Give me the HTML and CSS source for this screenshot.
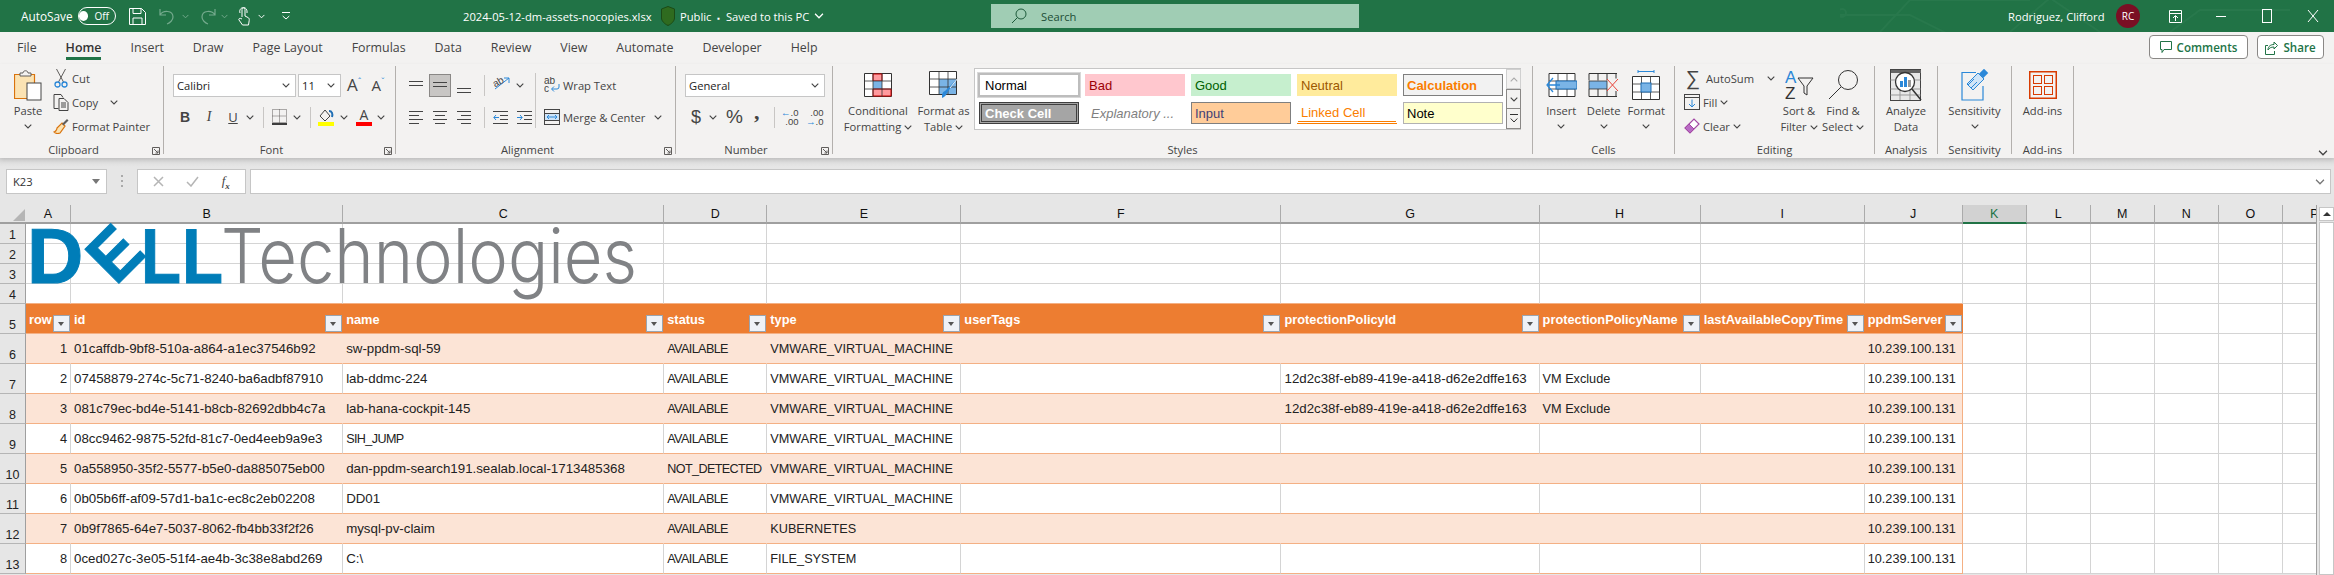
FILE: index.html
```html
<!DOCTYPE html>
<html lang="en">
<head>
  <meta charset="UTF-8" />
  <title>2024-05-12-dm-assets-nocopies.xlsx - Excel</title>
  <link rel="stylesheet" href="styles.css">
</head>
<body>
<svg class="defs" width="0" height="0">
  <symbol id="chev" viewBox="0 0 8 5"><path d="M.7.7 4 4 7.3.7" fill="none" stroke="currentColor" stroke-width="1.1"/></symbol>
  <symbol id="launch" viewBox="0 0 8 8"><path d="M.5 7.5V.5h7v7zM2 2l4 4M6 3.5V6H3.5" fill="none" stroke="#605e5c"/></symbol>
</svg>

<!-- title bar -->
<header class="titlebar">
  <svg class="circuit" viewBox="0 0 500 32" width="500" height="32"><path d="M0 15h70l60 30M40 32l30-32h120M170 32l40-34 50 34M330 32l30-22h90" fill="none" stroke="#2a7a4e" stroke-width="2"/><circle cx="2" cy="13" r="4" fill="none" stroke="#2a7a4e" stroke-width="2"/></svg>
  <span class="autosave">AutoSave</span>
  <span class="toggle"><i></i>Off</span>
  <svg class="qat-save" width="17" height="17" viewBox="0 0 17 17" fill="none" stroke="#fff"><path d="M.5.5h12l4 4v12H.5zM4 .5v5h8V.5M4 16.5V10h9v6.500"/></svg>
  <svg class="qat-undo" width="18" height="17" viewBox="0 0 18 17" fill="none" stroke="#74aa8d" stroke-width="1.200"><path d="M1 1v6h6M1 7c3-5 13-5 13 2 0 3-3 6-6 7"/></svg>
  <svg class="qat-chev dim" width="7" height="5"><use href="#chev"/></svg>
  <svg class="qat-redo" width="18" height="17" viewBox="0 0 18 17" fill="none" stroke="#74aa8d" stroke-width="1.200"><path d="M17 1v6h-6M17 7C14 2 4 2 4 9c0 3 3 6 6 7"/></svg>
  <svg class="qat-chev dim" width="7" height="5"><use href="#chev"/></svg>
  <svg class="qat-touch" width="12" height="19" viewBox="0 0 12 19" fill="none" stroke="#fff"><path d="M4 10V2.500a1.500 1.500 0 0 1 3 0V9l3 1.500c1 .5 1.500 1.500 1.200 3L10.500 18h-6L1 13c-.7-1 .5-2.500 3-1M2 6c-1-3 1-5.500 3.500-5.500S9.500 3 9 6"/></svg>
  <svg class="qat-chev2" width="7" height="5"><use href="#chev"/></svg>
  <svg class="qat-more" width="8" height="8" viewBox="0 0 8 8" fill="none" stroke="#fff"><path d="M0 .5h8M.7 4 4 7l3.300-3"/></svg>
  <span class="filename">2024-05-12-dm-assets-nocopies.xlsx</span>
  <svg class="shield" width="14" height="20" viewBox="0 0 14 20"><path d="M7 .5 13.500 3v9c0 3-3 6-6.500 7.500C3.500 18 .5 15 .5 12V3z" fill="#2f6b1f" stroke="#1b4a16"/></svg>
  <span class="doc-state">Public &nbsp;<b>▪</b>&nbsp; Saved to this PC</span>
  <svg class="doc-chev" width="10" height="6" viewBox="0 0 8 5"><use href="#chev"/></svg>
  <div class="search">
    <svg width="16" height="16" viewBox="0 0 16 16" fill="none" stroke="#1d5a3a"><circle cx="10" cy="6" r="5"/><path d="M6.500 9.500 1 15"/></svg>
    <span>Search</span>
  </div>
  <span class="user">Rodriguez, Clifford</span>
  <span class="avatar">RC</span>
  <svg class="win win-ribbon" width="13" height="13" viewBox="0 0 13 13" fill="none" stroke="#fff"><path d="M.5.5h12v12H.5zM.5 3.500h12M6.500 11V6M4 8l2.500-2.500L9 8"/></svg>
  <svg class="win win-min" width="12" height="12" viewBox="0 0 12 12" stroke="#fff"><path d="M1 6.500h10"/></svg>
  <svg class="win win-max" width="12" height="14" viewBox="0 0 12 14" fill="none" stroke="#fff"><rect x="1.500" y=".5" width="9" height="13"/></svg>
  <svg class="win win-close" width="12" height="14" viewBox="0 0 12 14" stroke="#fff"><path d="M1 1l10 12M11 1 1 13"/></svg>
</header>

<!-- tabs -->
<nav class="tabs">
  <a>File</a><a class="active">Home</a><a>Insert</a><a>Draw</a><a>Page Layout</a><a>Formulas</a><a>Data</a><a>Review</a><a>View</a><a>Automate</a><a>Developer</a><a>Help</a>
  <div class="tab-actions">
    <button class="action comments"><svg width="12" height="13" viewBox="0 0 12 13" fill="none" stroke="#217346"><path d="M.5.500h11v8H4L2 11.500V8.500H.5z"/></svg>Comments</button>
    <button class="action share"><svg width="13" height="15" viewBox="0 0 13 15" fill="none" stroke="#217346"><path d="M3 5.500H.5v9h9V11M3 10c0-4 3-5.500 6-5.500V2l3.500 3.500L9 9V7c-3 0-5 1-6 3z"/></svg>Share</button>
  </div>
</nav>

<!-- ribbon -->
<section class="ribbon">
  <div class="group g-clipboard">
    <div class="body">
      <div class="big paste">
        <div class="big-icon"><svg width="28" height="31" viewBox="0 0 28 31"><path d="M.5 4.500h20v24H.5z" fill="#fbe3b3" stroke="#d9730d" stroke-width="1.200"/><path d="M6 5V3h3c0-3 5-3 5 0h3v3H6z" fill="#f3f2f1" stroke="#605e5c"/><rect x="13" y="13" width="14" height="17" fill="#fff" stroke="#444"/></svg></div>
        <div class="big-text">Paste</div>
        <svg class="chev"><use href="#chev"/></svg>
      </div>
      <div class="small-col">
        <div class="small"><svg class="ico" width="15" height="19" viewBox="0 0 15 19" fill="none"><path d="M3 0l7 13M12 0 5 13" stroke="#605e5c"/><circle cx="4" cy="15.500" r="2.500" stroke="#2b88d8" stroke-width="1.300"/><circle cx="11" cy="15.500" r="2.500" stroke="#2b88d8" stroke-width="1.300"/></svg><span>Cut</span></div>
        <div class="small"><svg class="ico" width="15" height="17" viewBox="0 0 15 17" fill="none" stroke="#444"><path d="M5 14.500H.5V.5h7l2 3M5.500 4.500h5l4 4v8h-9zM7.500 9h5M7.500 11h5M7.500 13h5"/></svg><span>Copy</span><svg class="chev copy-chev"><use href="#chev"/></svg></div>
        <div class="small"><svg class="ico" width="16" height="16" viewBox="0 0 16 16"><path d="M9 5l3 3-5 7c-2 1-5 .5-6-1 1 0 3-2 3-4z" fill="#fbe3b3" stroke="#d9730d" stroke-width="1.200"/><path d="M9 6l5-5 1.500 1.500-5 5z" fill="#605e5c"/></svg><span>Format Painter</span></div>
      </div>
    </div>
    <div class="label">Clipboard<svg class="launch"><use href="#launch"/></svg></div>
  </div>

  <div class="group g-font">
    <div class="body">
      <div class="tool-row">
        <div class="select font-name">Calibri<svg class="chev"><use href="#chev"/></svg></div>
        <div class="select font-size">11<svg class="chev"><use href="#chev"/></svg></div>
        <span class="grow">A<sup>ˆ</sup></span>
        <span class="shrink">A<sup>ˇ</sup></span>
      </div>
      <div class="tool-row row2">
        <b class="fmt fmt-b">B</b>
        <i class="fmt fmt-i">I</i>
        <u class="fmt fmt-u">U</u>
        <svg class="chev ml6"><use href="#chev"/></svg>
        <span class="rsep ml9"></span>
        <svg class="ml8" width="15" height="16" viewBox="0 0 15 16" fill="none" stroke="#605e5c" stroke-dasharray="1 1"><path d="M.5.500h14v13H.5zM7.500.500v13M.5 7h14"/><path d="M0 15h15" stroke="#000" stroke-width="1.500" stroke-dasharray="none"/></svg>
        <svg class="chev ml6"><use href="#chev"/></svg>
        <span class="rsep ml9"></span>
        <svg class="ml7" width="16" height="18" viewBox="0 0 16 18"><path d="M2 8l5-6 5 6-5 5z" fill="none" stroke="#444"/><path d="M11 3c3 0 4 3 3 6" fill="none" stroke="#1f6fb5" stroke-width="2"/><rect y="14" width="16" height="4" fill="#ff0"/></svg>
        <svg class="chev ml6"><use href="#chev"/></svg>
        <span class="font-color ml8">A</span>
        <svg class="chev ml5"><use href="#chev"/></svg>
      </div>
    </div>
    <div class="label">Font<svg class="launch"><use href="#launch"/></svg></div>
  </div>

  <div class="group g-align">
    <div class="body align-body">
      <div class="align-grid">
        <div class="tool-row">
          <span class="al"><svg width="14" height="9" stroke="#444"><path d="M0 .5h14M0 4.500h14"/></svg></span>
          <span class="al on"><svg width="14" height="9" stroke="#444"><path d="M0 1.500h14M0 5.500h14"/></svg></span>
          <span class="al al-bot"><svg width="14" height="9" stroke="#444"><path d="M0 4.500h14M0 8.500h14"/></svg></span>
          <span class="rsep ml7"></span>
          <svg class="ml8" width="17" height="16" viewBox="0 0 17 16" fill="none"><path d="M2 12 16 1M11 1h5v5" stroke="#2b88d8"/><text x="0" y="9" class="abc" transform="rotate(-30 4 6)">ab</text></svg>
          <svg class="chev ml6"><use href="#chev"/></svg>
        </div>
        <div class="tool-row row2">
          <span class="al"><svg width="14" height="13" stroke="#444"><path d="M0 .5h14M0 4.500h10M0 8.500h14M0 12.500h10"/></svg></span>
          <span class="al"><svg width="14" height="13" stroke="#444"><path d="M0 .5h14M2 4.500h10M0 8.500h14M2 12.500h10"/></svg></span>
          <span class="al"><svg width="14" height="13" stroke="#444"><path d="M0 .5h14M4 4.500h10M0 8.500h14M4 12.500h10"/></svg></span>
          <span class="rsep ml7"></span>
          <svg class="ml8" width="15" height="13" fill="none" stroke="#444"><path d="M0 .5h15M7 4.500h8M7 8.500h8M0 12.500h15"/><path d="M6 6.500H1M3 4 .8 6.500 3 9" stroke="#2b88d8"/></svg>
          <svg class="ml9" width="15" height="13" fill="none" stroke="#444"><path d="M0 .5h15M7 4.500h8M7 8.500h8M0 12.500h15"/><path d="M0 6.500h5M3 4l2.200 2.500L3 9" stroke="#2b88d8"/></svg>
        </div>
      </div>
      <span class="rsep tall"></span>
      <div class="wrap-col">
        <div class="small wrap-row"><svg class="ico" width="16" height="16" viewBox="0 0 16 16" fill="none"><text x="0" y="7" class="abc">ab</text><text x="0" y="15" class="abc">c</text><path d="M15 7v3a2 2 0 0 1-2 2H8M10 9.500 7.500 12l2.500 2.500" stroke="#2b88d8"/></svg><span>Wrap Text</span></div>
        <div class="small merge-row"><svg class="ico" width="16" height="16" viewBox="0 0 16 16" fill="none"><rect x=".5" y=".5" width="15" height="15" stroke="#444"/><path d="M.5 4.500h15M.5 11.500h15" stroke="#444"/><rect x="1" y="5" width="14" height="6" fill="#cfe4f7"/><path d="M3 8h10M5 6 3 8l2 2M11 6l2 2-2 2" stroke="#2b88d8"/></svg><span>Merge &amp; Center</span><svg class="chev merge-chev"><use href="#chev"/></svg></div>
      </div>
    </div>
    <div class="label">Alignment<svg class="launch"><use href="#launch"/></svg></div>
  </div>

  <div class="group g-number">
    <div class="body">
      <div class="tool-row"><div class="select num-format">General<svg class="chev"><use href="#chev"/></svg></div></div>
      <div class="tool-row row2 num-row">
        <span class="sym dollar">$</span>
        <svg class="chev ml9"><use href="#chev"/></svg>
        <span class="sym percent">%</span>
        <span class="sym comma">,</span>
        <span class="rsep num-sep"></span>
        <span class="dec ml7"><span><em>←</em>.0</span><span>.00</span></span>
        <span class="dec ml8"><span>.00</span><span><em>→</em>.0</span></span>
      </div>
    </div>
    <div class="label">Number<svg class="launch"><use href="#launch"/></svg></div>
  </div>

  <div class="group g-styles">
    <div class="body styles-body">
      <div class="big b-cond">
        <div class="big-icon"><svg width="28" height="24" viewBox="0 0 28 24"><path d="M.5.5h27v23H.5z" fill="#fff" stroke="#333"/><path d="M9 1h9v7H9z" fill="#ff9a9e" stroke="#c00"/><path d="M9 8h9v8H9z" fill="#7ab4e6"/><path d="M9 16h18v7H9z" fill="#ff9a9e" stroke="#c00"/><path d="M9 .5v23M18 .5v23M.5 8h27M.5 16h27" fill="none" stroke="#333" stroke-width=".8"/></svg></div>
        <div class="big-text">Conditional</div>
        <div class="big-text">Formatting <svg class="chev"><use href="#chev"/></svg></div>
      </div>
      <div class="big b-table">
        <div class="big-icon"><svg width="30" height="28" viewBox="0 0 30 28"><path d="M.5.500h27v23H.5z" fill="#fff" stroke="#333"/><path d="M10 8h17v15H10z" fill="#7ab4e6"/><path d="M10 .5v23M19 .5v23M.5 8h27M.5 16h27" fill="none" stroke="#333" stroke-width=".8"/><path d="M29 7 20 19l-2 3c-1 3-3 4-5 5 0-3 0-6 3-7l2-2z" fill="#2b88d8"/><path d="M29 7 21 17" stroke="#eee" stroke-width="1"/></svg></div>
        <div class="big-text">Format as</div>
        <div class="big-text">Table <svg class="chev"><use href="#chev"/></svg></div>
      </div>
      <div class="gallery">
        <div class="gallery-cells">
          <span class="st st-normal">Normal</span><span class="st st-bad">Bad</span><span class="st st-good">Good</span><span class="st st-neutral">Neutral</span><span class="st st-calc">Calculation</span>
          <span class="st st-check">Check Cell</span><span class="st st-expl">Explanatory ...</span><span class="st st-input">Input</span><span class="st st-linked">Linked Cell</span><span class="st st-note">Note</span>
        </div>
        <div class="gallery-scroll">
          <span class="gs gs-up"><svg class="chev flip"><use href="#chev"/></svg></span>
          <span class="gs"><svg class="chev"><use href="#chev"/></svg></span>
          <span class="gs gs-more"><svg width="8" height="9" viewBox="0 0 8 9" fill="none" stroke="#333"><path d="M0 .5h8M.7 4.500 4 8l3.300-3.500"/></svg></span>
        </div>
      </div>
    </div>
    <div class="label">Styles</div>
  </div>

  <div class="group g-cells">
    <div class="body cells-body">
      <div class="big b-cell">
        <div class="big-icon"><svg width="31" height="24" viewBox="0 0 31 24"><path d="M3 .5h26v23H3z" fill="#fff" stroke="#333"/><path d="M3 8h26M3 16h26M12 .5v23M21 .5v23" stroke="#333" stroke-width=".8"/><rect x="10" y="8" width="21" height="8" fill="#7ab4e6" stroke="#1f6fb5"/><path d="M14 12H2M7 5 1 12l6 7" fill="none" stroke="#2b88d8" stroke-width="1.300"/></svg></div>
        <div class="big-text">Insert</div>
        <svg class="chev"><use href="#chev"/></svg>
      </div>
      <div class="big b-cell">
        <div class="big-icon"><svg width="31" height="24" viewBox="0 0 31 24"><path d="M1 .5h28M1 23.500h28M1 .5v7M1 16v7.500M10 .5v7M19 .5v7M10 16v7M19 16v7M28 .5v5M28 18v5" fill="none" stroke="#333"/><path d="M1 8h18v8H1z" fill="#7ab4e6" stroke="#333" stroke-width=".8"/><path d="M19 6l11 12M30 6 19 18" stroke="#e8433a" stroke-width="1"/></svg></div>
        <div class="big-text">Delete</div>
        <svg class="chev"><use href="#chev"/></svg>
      </div>
      <div class="big b-cell">
        <div class="big-icon"><svg width="28" height="30" viewBox="0 0 28 30"><path d="M6 1.500h16M6 0v3M22 0v3" stroke="#2b88d8"/><path d="M.5 6.500h27v23H.5z" fill="#fff" stroke="#333"/><path d="M.5 14h27M.5 22h27M9.500 6.500v23M18.500 6.500v23" stroke="#333" stroke-width=".8"/><rect x="9" y="13" width="10" height="9" fill="#7ab4e6" stroke="#1f6fb5"/></svg></div>
        <div class="big-text">Format</div>
        <svg class="chev"><use href="#chev"/></svg>
      </div>
    </div>
    <div class="label">Cells</div>
  </div>

  <div class="group g-editing">
    <div class="body edit-body">
      <div class="small-col edit-col">
        <div class="small"><span class="sigma">∑</span><span>AutoSum</span><svg class="chev autosum-chev"><use href="#chev"/></svg></div>
        <div class="small"><svg class="ico" width="16" height="16" viewBox="0 0 16 16" fill="none"><rect x=".5" y=".5" width="15" height="15" stroke="#444"/><path d="M.5 3.500h15" stroke="#444"/><path d="M8 5.500v7M5 10l3 3 3-3" stroke="#2b88d8"/></svg><span>Fill</span><svg class="chev ml3"><use href="#chev"/></svg></div>
        <div class="small"><svg class="ico" width="16" height="16" viewBox="0 0 16 16"><path d="M1 10 10 1l5 5-9 9z" fill="#fff" stroke="#a349a4" stroke-width="1.200"/><path d="M1 10l4-4 5 5-4 4z" fill="#b86bc4" stroke="#a349a4"/></svg><span>Clear</span><svg class="chev ml3"><use href="#chev"/></svg></div>
      </div>
      <div class="big b-sort">
        <div class="big-icon"><svg width="29" height="30" viewBox="0 0 29 30" fill="none"><text x="0" y="13" class="az az-a">A</text><text x="0" y="29" class="az">Z</text><path d="M13 8h15l-6 8v9l-3-2v-7z" stroke="#333"/></svg></div>
        <div class="big-text">Sort &amp;</div>
        <div class="big-text">Filter <svg class="chev"><use href="#chev"/></svg></div>
      </div>
      <div class="big b-find">
        <div class="big-icon"><svg width="30" height="30" viewBox="0 0 30 30" fill="none" stroke="#333"><circle cx="20" cy="10" r="9.500"/><path d="M13 17 1 29"/></svg></div>
        <div class="big-text">Find &amp;</div>
        <div class="big-text">Select <svg class="chev"><use href="#chev"/></svg></div>
      </div>
    </div>
    <div class="label">Editing</div>
  </div>

  <div class="group g-analysis">
    <div class="body">
      <div class="big b-full">
        <div class="big-icon"><svg width="32" height="32" viewBox="0 0 32 32" fill="none"><rect x=".5" y=".5" width="30" height="31" fill="#e8e8e8" stroke="#444"/><rect x="1" y="1" width="30" height="3" fill="#666"/><path d="M.5 11h30M.5 20h30M.5 26h30M10 4v27M20 4v27" stroke="#999"/><circle cx="15" cy="13" r="9.500" fill="#fff" stroke="#333" stroke-width="1.300"/><rect x="10" y="12" width="3" height="6" fill="#2b88d8"/><rect x="14" y="8" width="3" height="10" fill="#2b88d8"/><rect x="18" y="11" width="3" height="7" fill="#999"/><path d="M22 20l9 11" stroke="#333" stroke-width="1.500"/></svg></div>
        <div class="big-text">Analyze</div>
        <div class="big-text">Data</div>
      </div>
    </div>
    <div class="label">Analysis</div>
  </div>

  <div class="group g-sens">
    <div class="body">
      <div class="big b-full">
        <div class="big-icon"><svg width="28" height="32" viewBox="0 0 28 32" fill="none"><path d="M1 3.500h14M1 3v28h21V17" stroke="#2b88d8" stroke-width="1.200"/><path d="M6 15 17 4l6 6-11 11z" fill="#cfe4f7" stroke="#2b88d8"/><path d="M9 16l6 6M12 13l6 6" stroke="#2b88d8" transform="rotate(90 14 15)"/><rect x="20" y="1" width="6" height="7" fill="#2b88d8" transform="rotate(45 23 4)"/></svg></div>
        <div class="big-text">Sensitivity</div>
        <svg class="chev"><use href="#chev"/></svg>
      </div>
    </div>
    <div class="label">Sensitivity</div>
  </div>

  <div class="group g-addins">
    <div class="body">
      <div class="big b-full">
        <div class="big-icon"><svg width="28" height="28" viewBox="0 0 28 28" fill="none" stroke="#d83b01"><rect x=".75" y=".75" width="26.500" height="26.500" stroke-width="1.500"/><rect x="4.500" y="4.500" width="8" height="8"/><rect x="15.500" y="4.500" width="8" height="8"/><rect x="4.500" y="15.500" width="8" height="8"/><rect x="15.500" y="15.500" width="8" height="8"/></svg></div>
        <div class="big-text">Add-ins</div>
      </div>
    </div>
    <div class="label">Add-ins</div>
  </div>
  <svg class="collapse" viewBox="0 0 8 5"><use href="#chev"/></svg>
</section>

<!-- formula bar -->
<div class="formula">
  <div class="namebox">K23<span class="down"></span></div>
  <span class="dots"></span>
  <div class="fx-btns">
    <svg width="11" height="11" stroke="#b5b5b5" stroke-width="1.500"><path d="M1 1l9 9M10 1l-9 9"/></svg>
    <svg width="13" height="11" fill="none" stroke="#b5b5b5" stroke-width="1.500"><path d="M1 6l4 4 7-9"/></svg>
    <span class="fx">f<sub>x</sub></span>
  </div>
  <div class="fx-input"><svg width="10" height="6" viewBox="0 0 8 5" class="fx-chev"><use href="#chev"/></svg></div>
</div>

<!-- sheet -->
<main class="sheet">
  <div class="grid-wrap">
    <table class="grid">
      <colgroup>
        <col class="c-row"><col class="c-a"><col class="c-b"><col class="c-c"><col class="c-d"><col class="c-e"><col class="c-f"><col class="c-g"><col class="c-h"><col class="c-i"><col class="c-j"><col class="c-x"><col class="c-x"><col class="c-x"><col class="c-x"><col class="c-x"><col class="c-x">
      </colgroup>
      <tr class="col-head">
        <th class="corner"><svg width="14" height="14"><path d="M13 1v12H1z" fill="#b5b5b5"/></svg></th>
        <th>A</th><th>B</th><th>C</th><th>D</th><th>E</th><th>F</th><th>G</th><th>H</th><th>I</th><th>J</th><th class="sel">K</th><th>L</th><th>M</th><th>N</th><th>O</th><th>P</th>
      </tr>
      <tr class="r20"><th class="rh">1</th><td></td><td></td><td></td><td></td><td></td><td></td><td></td><td></td><td></td><td></td><td></td><td></td><td></td><td></td><td></td><td></td></tr>
      <tr class="r20"><th class="rh">2</th><td></td><td></td><td></td><td></td><td></td><td></td><td></td><td></td><td></td><td></td><td></td><td></td><td></td><td></td><td></td><td></td></tr>
      <tr class="r20"><th class="rh">3</th><td></td><td></td><td></td><td></td><td></td><td></td><td></td><td></td><td></td><td></td><td></td><td></td><td></td><td></td><td></td><td></td></tr>
      <tr class="r20 before-head"><th class="rh">4</th><td class="o"></td><td class="o"></td><td class="o"></td><td class="o"></td><td class="o"></td><td class="o"></td><td class="o"></td><td class="o"></td><td class="o"></td><td class="o"></td><td></td><td></td><td></td><td></td><td></td><td></td></tr>
      <tr class="r30 head">
        <th class="rh">5</th>
        <td class="h">row<span class="filter"></span></td><td class="h">id<span class="filter"></span></td><td class="h">name<span class="filter"></span></td><td class="h">status<span class="filter"></span></td><td class="h">type<span class="filter"></span></td><td class="h">userTags<span class="filter"></span></td><td class="h">protectionPolicyId<span class="filter"></span></td><td class="h">protectionPolicyName<span class="filter"></span></td><td class="h">lastAvailableCopyTime<span class="filter"></span></td><td class="h">ppdmServer<span class="filter"></span></td>
        <td></td><td></td><td></td><td></td><td></td><td></td>
      </tr>
      <tr class="r30 band"><th class="rh">6</th><td class="d num">1</td><td class="d">01caffdb-9bf8-510a-a864-a1ec37546b92</td><td class="d">sw-ppdm-sql-59</td><td class="d st-col">AVAILABLE</td><td class="d ty-col">VMWARE_VIRTUAL_MACHINE</td><td class="d"></td><td class="d"></td><td class="d"></td><td class="d"></td><td class="d last">10.239.100.131</td><td></td><td></td><td></td><td></td><td></td><td></td></tr>
      <tr class="r30"><th class="rh">7</th><td class="d num">2</td><td class="d">07458879-274c-5c71-8240-ba6adbf87910</td><td class="d">lab-ddmc-224</td><td class="d st-col">AVAILABLE</td><td class="d ty-col">VMWARE_VIRTUAL_MACHINE</td><td class="d"></td><td class="d">12d2c38f-eb89-419e-a418-d62e2dffe163</td><td class="d ty-col">VM Exclude</td><td class="d"></td><td class="d last">10.239.100.131</td><td></td><td></td><td></td><td></td><td></td><td></td></tr>
      <tr class="r30 band"><th class="rh">8</th><td class="d num">3</td><td class="d">081c79ec-bd4e-5141-b8cb-82692dbb4c7a</td><td class="d">lab-hana-cockpit-145</td><td class="d st-col">AVAILABLE</td><td class="d ty-col">VMWARE_VIRTUAL_MACHINE</td><td class="d"></td><td class="d">12d2c38f-eb89-419e-a418-d62e2dffe163</td><td class="d ty-col">VM Exclude</td><td class="d"></td><td class="d last">10.239.100.131</td><td></td><td></td><td></td><td></td><td></td><td></td></tr>
      <tr class="r30"><th class="rh">9</th><td class="d num">4</td><td class="d">08cc9462-9875-52fd-81c7-0ed4eeb9a9e3</td><td class="d st-col">SIH_JUMP</td><td class="d st-col">AVAILABLE</td><td class="d ty-col">VMWARE_VIRTUAL_MACHINE</td><td class="d"></td><td class="d"></td><td class="d"></td><td class="d"></td><td class="d last">10.239.100.131</td><td></td><td></td><td></td><td></td><td></td><td></td></tr>
      <tr class="r30 band"><th class="rh">10</th><td class="d num">5</td><td class="d">0a558950-35f2-5577-b5e0-da885075eb00</td><td class="d">dan-ppdm-search191.sealab.local-1713485368</td><td class="d st-col">NOT_DETECTED</td><td class="d ty-col">VMWARE_VIRTUAL_MACHINE</td><td class="d"></td><td class="d"></td><td class="d"></td><td class="d"></td><td class="d last">10.239.100.131</td><td></td><td></td><td></td><td></td><td></td><td></td></tr>
      <tr class="r30"><th class="rh">11</th><td class="d num">6</td><td class="d">0b05b6ff-af09-57d1-ba1c-ec8c2eb02208</td><td class="d">DD01</td><td class="d st-col">AVAILABLE</td><td class="d ty-col">VMWARE_VIRTUAL_MACHINE</td><td class="d"></td><td class="d"></td><td class="d"></td><td class="d"></td><td class="d last">10.239.100.131</td><td></td><td></td><td></td><td></td><td></td><td></td></tr>
      <tr class="r30 band"><th class="rh">12</th><td class="d num">7</td><td class="d">0b9f7865-64e7-5037-8062-fb4bb33f2f26</td><td class="d">mysql-pv-claim</td><td class="d st-col">AVAILABLE</td><td class="d ty-col">KUBERNETES</td><td class="d"></td><td class="d"></td><td class="d"></td><td class="d"></td><td class="d last">10.239.100.131</td><td></td><td></td><td></td><td></td><td></td><td></td></tr>
      <tr class="r30"><th class="rh">13</th><td class="d num">8</td><td class="d">0ced027c-3e05-51f4-ae4b-3c38e8abd269</td><td class="d">C:\</td><td class="d st-col">AVAILABLE</td><td class="d ty-col">FILE_SYSTEM</td><td class="d"></td><td class="d"></td><td class="d"></td><td class="d"></td><td class="d last">10.239.100.131</td><td></td><td></td><td></td><td></td><td></td><td></td></tr>
    </table>
    <!-- picture floating over rows 1-4 -->
    <svg class="logo" viewBox="0 205 660 100" width="660" height="100">
      <g class="dell">
        <text x="27" y="283">D</text>
        <text transform="translate(113 254) rotate(-45)" x="-21" y="25" class="dell-e" textLength="45" lengthAdjust="spacingAndGlyphs">E</text>
        <text x="141" y="283" textLength="40" lengthAdjust="spacingAndGlyphs">L</text>
        <text x="182" y="283" textLength="41" lengthAdjust="spacingAndGlyphs">L</text>
      </g>
      <text class="tech" x="221" y="283" textLength="416" lengthAdjust="spacingAndGlyphs">Technologies</text>
    </svg>
  </div>
  <div class="vscroll">
    <span class="vs-up"></span>
    <span class="vs-thumb"></span>
  </div>
</main>
</body>
</html>
```

FILE: styles.css
```css
* { box-sizing: border-box; }
html, body { margin: 0; height: 575px; overflow: hidden; }
body { width: 2334px; background: #e6e6e6; font-family: "Open Sans", "Noto Sans", sans-serif; font-size: 11.2px; color: #444; }
.defs { position: absolute; }

/* title bar */
.titlebar { position: relative; display: flex; align-items: center; height: 32px; background: #217346; color: #fff; }
.circuit { position: absolute; left: 1840px; top: 0; opacity: .8; }
.titlebar > *:not(.circuit) { position: relative; flex: none; }
.autosave { margin-left: 21px; width: 50px; font-size: 11.8px; white-space: nowrap; }
.toggle { display: flex; align-items: center; justify-content: flex-end; margin-left: 7px; width: 38px; height: 18px; padding-right: 6px; border: 1px solid #fff; border-radius: 9px; font-size: 10px; }
.toggle i { width: 10px; height: 10px; margin-right: 6px; border-radius: 50%; background: #fff; }
.qat-save { margin-left: 13px; }
.qat-undo { margin-left: 13px; }
.qat-chev { margin-left: 5px; color: #fff; width: 7px; }
.qat-chev.dim { color: #74aa8d; }
.qat-redo { margin-left: 9px; }
.qat-touch { margin-left: 10px; }
.qat-chev2 { margin-left: 8px; color: #fff; }
.qat-more { margin-left: 17px; }
.filename { margin-left: 173px; width: 193px; white-space: nowrap; }
.shield { margin-left: 5px; }
.doc-state { margin-left: 5px; width: 134px; white-space: nowrap; }
.doc-state b { font-size: 8px; }
.doc-chev { color: #fff; }
.search { display: flex; align-items: center; gap: 14px; margin-left: 167px; padding-left: 20px; width: 368px; height: 24px; background: #a0cdb4; color: #1d4e36; }
.user { margin-left: 649px; width: 98px; white-space: nowrap; }
.avatar { display: flex; align-items: center; justify-content: center; margin-left: 10px; width: 24px; height: 24px; border-radius: 50%; background: #7a0f24; font-size: 10px; }
.win { flex: none; }
.win-ribbon { margin-left: 29px; }
.win-min { margin-left: 33px; }
.win-max { margin-left: 34px; }
.win-close { margin-left: 34px; }

/* tabs */
.tabs { display: flex; align-items: flex-start; gap: 29px; height: 32px; padding: 6px 0 0 17px; background: #f3f2f1; color: #444; font-size: 12.4px; }
.tabs a { height: 22px; line-height: 19px; border-bottom: 3px solid transparent; }
.tabs a.active { font-weight: 600; border-bottom-color: #217346; color: #333; }
.tab-actions { display: flex; gap: 9px; margin-left: auto; margin-top: -3px; margin-right: 10px; }
.action { display: flex; align-items: center; justify-content: center; gap: 5px; height: 24px; border: 1px solid #8a8886; border-radius: 4px; background: #fff; color: #217346; font: 600 11.6px "Open Sans", sans-serif; }
.comments { width: 99px; }
.share { width: 67px; }

/* ribbon */
.ribbon { position: relative; display: flex; height: 94px; padding-top: 2px; background: #f3f2f1; box-shadow: 0 2px 4px rgb(0 0 0 / .12); }
.group { position: relative; flex: none; height: 88px; border-right: 1px solid #b3b0ad; }
.body { height: 76px; }
.label { position: relative; height: 12px; line-height: 16px; text-align: center; white-space: nowrap; }
.label:has(.launch) { padding-right: 16px; }
.launch { position: absolute; right: 3px; top: 5px; width: 8px; height: 8px; }
.g-clipboard { width: 164px; }
.g-font { width: 232px; }
.g-align { width: 280px; }
.g-number { width: 157px; }
.g-styles { width: 700px; }
.g-cells { width: 142px; }
.g-editing { width: 200px; }
.g-analysis { width: 63px; }
.g-sens { width: 74px; }
.g-addins { width: 62px; }
.collapse { position: absolute; left: 2318px; top: 86px; width: 10px; height: 6px; color: #444; }

.chev { width: 8px; height: 5px; color: #444; flex: none; }
.flip { transform: rotate(180deg); color: #aaa; }
.big { display: flex; flex-direction: column; align-items: center; padding-top: 1px; flex: none; white-space: nowrap; }
.big-icon { display: flex; align-items: center; justify-content: center; height: 36px; }
.big-text { line-height: 16px; }
.big > .chev { margin-top: 5px; }
.big-text .chev { vertical-align: 1px; }
.b-full { width: 100%; }

.g-clipboard .body { display: flex; }
.paste { width: 50px; margin-left: 3px; }
.small-col { display: flex; flex-direction: column; }
.small { display: flex; align-items: center; height: 24px; white-space: nowrap; }
.ico { flex: none; margin-right: 3px; }
.small-col .ico { width: 16px; }
.copy-chev { margin-left: 12px; }

/* font and number controls */
.tool-row { display: flex; align-items: center; height: 22px; }
.row2 { margin-top: 10px; }
.g-font .body, .g-number .body { padding: 8px 0 0 9px; }
.select { display: flex; align-items: center; justify-content: space-between; height: 23px; padding: 0 5px 0 3px; background: #fff; border: 1px solid #c6c6c6; color: #222; }
.font-name { width: 123px; }
.font-size { width: 43px; margin-left: 2px; }
.grow { margin-left: 6px; font-size: 17px; line-height: 22px; }
.shrink { margin-left: 10px; font-size: 15px; line-height: 22px; }
.grow sup, .shrink sup { font-size: 9px; color: #2b88d8; vertical-align: 6px; line-height: 0; }
.fmt { width: 14px; text-align: center; font-size: 13px; color: #444; }
.fmt-b { margin-left: 5px; font-family: "Liberation Sans", sans-serif; font-size: 14px; }
.fmt-i { margin-left: 10px; font-family: "Liberation Serif", serif; font-size: 14px; }
.fmt-u { margin-left: 10px; }
.rsep { display: block; flex: none; width: 1px; height: 21px; background: #c8c6c4; }
.ml3 { margin-left: 3px; }
.ml5 { margin-left: 5px; }
.ml6 { margin-left: 6px; }
.ml7 { margin-left: 7px; }
.ml8 { margin-left: 8px; }
.ml9 { margin-left: 9px; }
.font-color { width: 16px; height: 18px; line-height: 14px; text-align: center; font-size: 14px; border-bottom: 4px solid #f00; }

/* alignment */
.align-body { display: flex; padding: 8px 0 0 9px; }
.align-grid { width: 130px; }
.al { display: flex; align-items: center; justify-content: center; flex: none; width: 22px; height: 23px; margin-right: 2px; margin-left: 0; }
.al-bot { padding-top: 6px; }
.al.on { background: #c8c6c4; border: 1px solid #8a8886; }
.abc { font: 10px "Liberation Sans", sans-serif; fill: #444; }
.tall { height: 55px; margin-top: -1px; }
.wrap-col { margin-left: 8px; }
.wrap-row { height: 22px; }
.merge-row { height: 22px; margin-top: 10px; }
.merge-chev { margin-left: 9px; }

/* number */
.num-format { width: 140px; }
.num-row { margin-left: 6px; }
.sym { font-family: "Liberation Sans", sans-serif; color: #444; }
.dollar { font-size: 18px; width: 9px; }
.percent { margin-left: 9px; font-size: 19px; width: 17px; }
.comma { margin-left: 11px; font: bold 22px "Liberation Serif", serif; margin-top: -10px; }
.num-sep { margin-left: 14px; }
.dec { display: flex; flex-direction: column; align-items: flex-end; width: 17px; font: 9.5px/9px "Liberation Sans", sans-serif; }
.dec em { color: #2b88d8; font-style: normal; }

/* styles gallery */
.styles-body { display: flex; }
.b-cond { width: 70px; margin-left: 10px; }
.b-table { width: 61px; }
.gallery { display: flex; width: 547px; height: 62px; margin-top: 2px; background: #fff; border: 1px solid #c6c6c6; border-right: 0; }
.gallery-cells { display: grid; grid-template-columns: repeat(5, 100px); grid-auto-rows: 22px; gap: 6px; padding: 5px 0 0 4px; width: 531px; font-family: "Liberation Sans", sans-serif; font-size: 13px; }
.st { display: flex; align-items: center; padding-left: 3px; white-space: nowrap; border: 1px solid transparent; }
.st-normal { border: 2px solid #bdbdbd; outline: 1px solid #d8d8d8; color: #000; margin: -1px; padding-left: 5px; }
.st-bad { background: #ffc7ce; color: #9c0006; }
.st-good { background: #c6efce; color: #006100; }
.st-neutral { background: #ffeb9c; color: #9c5700; }
.st-calc { background: #f2f2f2; border-color: #7f7f7f; color: #fa7d00; font-weight: 700; }
.st-check { background: #a5a5a5; border: 3px double #3f3f3f; color: #fff; font-weight: 700; }
.st-expl { color: #7f7f7f; font-style: italic; padding-left: 5px; }
.st-input { background: #fc9; border-color: #7f7f7f; color: #3f3f76; }
.st-linked { border-bottom: 3px double #fa7d00; color: #fa7d00; }
.st-note { background: #ffc; border-color: #b2b2b2; color: #000; }
.gallery-scroll { display: flex; flex-direction: column; width: 15px; }
.gs { display: flex; align-items: center; justify-content: center; height: 20px; background: #f3f2f1; border: 1px solid #8a8886; }
.gs-up { border-color: #d0d0d0; }
.gs-more { height: 21px; margin-top: -1px; }

/* cells, editing */
.cells-body, .edit-body { display: flex; }
.cells-body { padding-left: 7px; }
.b-cell { width: 42.5px; }
.edit-body { padding-left: 9px; }
.edit-col { width: 93px; }
.sigma { width: 18px; margin-right: 4px; font: 20px "Liberation Sans", sans-serif; color: #444; text-align: center; }
.autosum-chev { margin-left: 13px; }
.b-sort, .b-find { width: 44px; }
.az { font: 17px "Liberation Sans", sans-serif; fill: #333; }
.az-a { fill: #2b88d8; }

/* formula bar */
.formula { display: flex; align-items: flex-start; height: 47px; padding: 11px 3px 0 6px; background: linear-gradient(#d8d8d8, #e6e6e6 9px); }
.namebox { position: relative; display: flex; align-items: center; justify-content: space-between; width: 101px; height: 25px; padding: 0 6px; background: #fff; border: 1px solid #c6c6c6; color: #333; }
.down { width: 0; height: 0; border: 4px solid transparent; border-top: 5px solid #777; border-bottom: 0; }
.dots { width: 2px; height: 14px; margin: 6px 14px 0 14px; background: repeating-linear-gradient(#aaa 0 2px, transparent 2px 5px); }
.fx-btns { display: flex; align-items: center; justify-content: space-around; width: 109px; height: 25px; padding: 0 4px; background: #fff; border: 1px solid #c6c6c6; }
.fx { font: italic 13px "Liberation Serif", serif; color: #444; }
.fx sub { font-size: 9px; font-weight: 700; }
.fx-input { display: flex; align-items: center; justify-content: flex-end; flex: 1; height: 25px; margin-left: 4px; padding-right: 5px; background: #fff; border: 1px solid #c6c6c6; }
.fx-chev { color: #777; }

/* sheet */
.sheet { display: flex; height: 370px; }
.grid-wrap { position: relative; width: 2317px; height: 370px; overflow: hidden; border-right: 1px solid #a0a0a0; }
.grid { table-layout: fixed; width: 2347px; border-collapse: separate; border-spacing: 0; font-family: "Liberation Sans", sans-serif; font-size: 13.3px; color: #222; background: #fff; }
.c-row { width: 26px; }
.c-a { width: 45px; }
.c-b { width: 272px; }
.c-c { width: 321px; }
.c-d { width: 103px; }
.c-e { width: 194px; }
.c-f { width: 320px; }
.c-g { width: 258px; }
.c-h { width: 161px; }
.c-i { width: 164px; }
.c-j { width: 98px; }
.c-x { width: 64px; }
.grid th, .grid td { padding: 0; overflow: hidden; white-space: nowrap; }
.col-head th { height: 19px; background: #e6e6e6; font-size: 12.5px; font-weight: 400; color: #111; border-right: 1px solid #ababab; border-bottom: 2px solid #9f9f9f; }
.col-head .corner { border-right: 0; text-align: right; vertical-align: bottom; line-height: 0; }
.col-head .sel { background: #d2d2d2; color: #217346; border-bottom-color: #217346; }
.rh { background: #e6e6e6; font-size: 12.5px; font-weight: 400; color: #222; border-right: 1px solid #9f9f9f; border-bottom: 1px solid #b5b5b5; text-align: center; vertical-align: bottom; padding-bottom: 1px !important; }
.r20 { height: 20px; }
.r30 { height: 30px; }
.grid td { border-right: 1px solid #d4d4d4; border-bottom: 1px solid #d4d4d4; }
.grid td.o { border-bottom-color: #f4b084; }
.grid td.h { position: relative; background: #ed7d31; color: #fff; font-size: 12.8px; font-weight: 700; padding: 1px 0 0 3px; border-right: 0; border-bottom: 1px solid #f4b084; }
.grid td.d { padding-left: 3px; border-bottom-color: #f4b084; }
.grid td.num { padding: 0 3px 0 0; font-size: 12.8px; text-align: right; }
.grid td.st-col { font-size: 12.6px; letter-spacing: -.6px; }
.grid td.ty-col, .grid td.last { font-size: 12.7px; }
.band td.d { background: #fce4d6; border-right-color: #fce4d6; }
.grid td.last, .band td.last { border-right-color: #f4b084; }
.filter { position: absolute; right: 1px; top: 11px; width: 17px; height: 17px; background: #eff2f7; border: 1px solid #9aa4b0; }
.filter::after { content: ""; position: absolute; left: 4px; top: 6px; border: 3.5px solid transparent; border-top: 4px solid #555; border-bottom: 0; }
.logo { position: absolute; left: 0; top: 0; }
.dell text { font: 700 78px "Liberation Sans", sans-serif; fill: #007db8; stroke: #007db8; stroke-width: 1; }
.dell .dell-e { font-size: 70px; }
.tech { font: 300 76px Inter, "Liberation Sans", sans-serif; fill: #808285; }
.vscroll { display: flex; flex-direction: column; margin-left: 2px; margin-top: 2px; width: 15px; gap: 1px; }
.vs-up { height: 14px; background: #fff; border: 1px solid #c6c6c6; position: relative; }
.vs-up::after { content: ""; position: absolute; left: 3px; top: 4px; border: 4px solid transparent; border-bottom: 4px solid #333; border-top: 0; }
.vs-thumb { flex: 1; background: #fff; border: 1px solid #c6c6c6; }
```
